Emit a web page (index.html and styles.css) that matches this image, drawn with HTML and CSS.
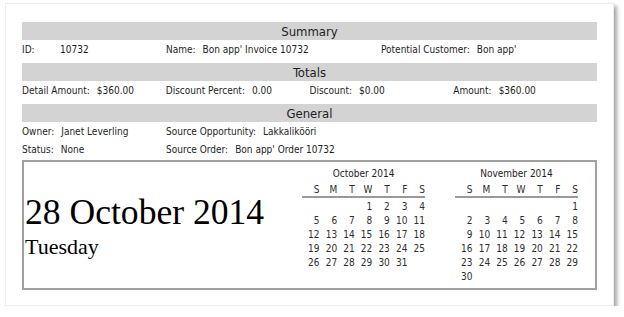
FILE: index.html
```html
<!DOCTYPE html>
<html lang="en">
<head>
    <meta charset="UTF-8">
    <meta name="viewport" content="width=device-width, initial-scale=1.0">
    <title>Invoice 10732</title>
    <link rel="stylesheet" href="styles.css">
</head>
<body>
    <div class="page">
        <div class="section">
            <div class="section-title">Summary</div>
            <div class="row summary-row">
                <div class="field"><span class="label id-label">ID:</span>10732</div>
                <div class="field"><span class="label">Name:</span>Bon app' Invoice 10732</div>
                <div class="field"><span class="label">Potential Customer:</span>Bon app'</div>
            </div>
        </div>

        <div class="section">
            <div class="section-title">Totals</div>
            <div class="row totals-row">
                <div class="field"><span class="label">Detail Amount:</span>$360.00</div>
                <div class="field"><span class="label">Discount Percent:</span>0.00</div>
                <div class="field"><span class="label">Discount:</span>$0.00</div>
                <div class="field"><span class="label">Amount:</span>$360.00</div>
            </div>
        </div>

        <div class="section general">
            <div class="section-title">General</div>
            <div class="row general-row">
                <div class="field"><span class="label">Owner:</span>Janet Leverling</div>
                <div class="field"><span class="label">Source Opportunity:</span>Lakkalikööri</div>
            </div>
            <div class="row general-row">
                <div class="field"><span class="label">Status:</span>None</div>
                <div class="field"><span class="label">Source Order:</span>Bon app' Order 10732</div>
            </div>
        </div>

        <div class="datebox">
            <div class="today">
                <div class="today-date">28 October 2014</div>
                <div class="today-day">Tuesday</div>
            </div>
            <div class="cal" id="cal-oct"></div>
            <div class="cal" id="cal-nov"></div>
        </div>
    </div>

    <script>
        // small month grid: title, weekday header, then the days
        function drawMonth(el, title, year, month) {
            const names = ['S', 'M', 'T', 'W', 'T', 'F', 'S'];
            const first = new Date(year, month, 1).getDay();
            const count = new Date(year, month + 1, 0).getDate();

            let html = `<div class="cal-title">${title}</div><div class="cal-head">`;
            names.forEach(n => { html += `<span>${n}</span>`; });
            html += '</div><div class="cal-days">';
            for (let i = 0; i < first; i++) html += '<span></span>';
            for (let d = 1; d <= count; d++) html += `<span>${d}</span>`;
            html += '</div>';
            el.innerHTML = html;
        }

        drawMonth(document.getElementById('cal-oct'), 'October 2014', 2014, 9);
        drawMonth(document.getElementById('cal-nov'), 'November 2014', 2014, 10);
    </script>
</body>
</html>
```

FILE: styles.css
```css
body {
    margin: 0;
    background: #fff;
    font-family: "DejaVu Sans Condensed", "DejaVu Sans", sans-serif;
    font-size: 10px;
    color: #1e1e1e;
}
.page {
    width: 575px;
    margin: 3px 0 0 5px;
    padding: 18px 16px 15px 16px;
    background: #fff;
    border: 1px solid #ececec;
    box-shadow: 3px 3px 4px rgba(0,0,0,0.35);
}
.section {
    margin-bottom: 5px;
}
.section.general {
    margin-bottom: 2px;
}
.section-title {
    background: #d3d3d3;
    height: 18px;
    line-height: 19px;
    text-align: center;
    font-size: 13px;
}
.row {
    display: grid;
    height: 18px;
    line-height: 20px;
}
.summary-row {
    grid-template-columns: 144px 215px 1fr;
}
.totals-row {
    grid-template-columns: repeat(4, 1fr);
}
.general-row {
    grid-template-columns: 144px 1fr;
}
.label {
    margin-right: 7px;
}
.id-label {
    display: inline-block;
    width: 31px;
}
.datebox {
    display: flex;
    height: 126px;
    border: 2px solid #a0a0a0;
    padding: 0 17px 0 1px;
}
.today {
    flex: 1;
    padding-top: 32px;
    font-family: "Liberation Serif", serif;
    color: #000;
}
.today-date {
    font-size: 35.6px;
    line-height: 36px;
}
.today-day {
    font-size: 22px;
    line-height: 26px;
    margin-top: 4px;
}
.cal {
    width: 123px;
    margin-left: 30px;
    color: #2e2e2e;
}
.cal-title {
    text-align: center;
    line-height: 14px;
    margin: 5px 0 3px 0;
    color: #1e1e1e;
}
.cal-head,
.cal-days {
    display: grid;
    grid-template-columns: repeat(7, 1fr);
    text-align: right;
}
.cal-head {
    line-height: 12px;
    border-bottom: 2px solid #999;
}
.cal-days {
    padding-top: 2px;
    line-height: 14px;
}
```
